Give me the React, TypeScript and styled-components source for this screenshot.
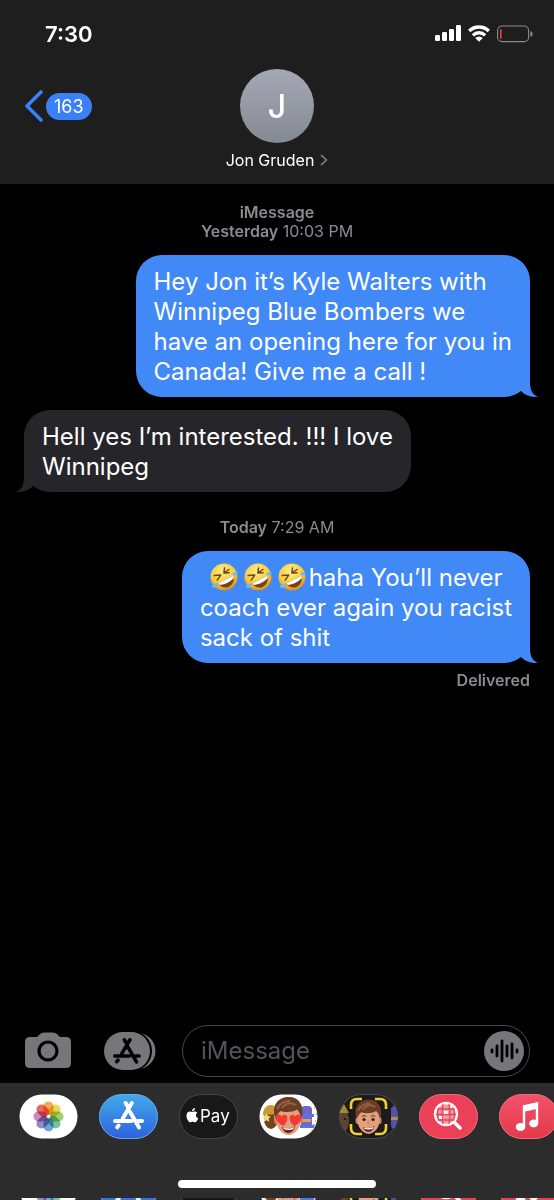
import React from "react";
import styled, { createGlobalStyle, css } from "styled-components";

const Global = createGlobalStyle`
  * { box-sizing: border-box; }
  html, body { margin: 0; background: #000; }
  body { font-family: Inter, "Liberation Sans", sans-serif; color: #fff; }
  button, input { font: inherit; }
`;

const Screen = styled.div`
  display: flex;
  flex-direction: column;
  min-height: 100vh;
`;

const Header = styled.header`
  background: #1e1e1e;
  padding-bottom: 13px;
`;

const StatusBar = styled.div`
  display: flex;
  align-items: center;
  justify-content: space-between;
  height: 69px;
  padding: 0 21px 2px 45px;
`;

const Clock = styled.time`
  font-size: 22px;
  font-weight: 600;
  line-height: 28px;
`;

const StatusIcons = styled.div`
  display: flex;
  align-items: center;
  gap: 7px;
`;

const NavBar = styled.nav`
  display: grid;
  grid-template-columns: 1fr auto 1fr;
  align-items: start;
  padding: 0 24px;
`;

const IconButton = styled.button`
  display: flex;
  align-items: center;
  padding: 0;
  border: 0;
  background: none;
  color: inherit;
  cursor: pointer;
`;

const BackButton = styled(IconButton)`
  gap: 3px;
  height: 74px;
  justify-self: start;
`;

const CountBadge = styled.span`
  padding: 0 8px;
  border-radius: 14px;
  background: #3a80f6;
  font-size: 18px;
  line-height: 27px;
`;

const ContactButton = styled(IconButton)`
  flex-direction: column;
  gap: 6px;
`;

const Avatar = styled.span`
  display: grid;
  place-items: center;
  width: 74px;
  height: 74px;
  border-radius: 50%;
  background: linear-gradient(#a5a9b6, #858992);
  font-size: 32px;
  font-weight: 500;
`;

const ContactName = styled.span`
  display: flex;
  align-items: center;
  gap: 6px;
  font-size: 16px;
  line-height: 22px;
`;

const Thread = styled.main`
  display: flex;
  flex: 1;
  flex-direction: column;
  padding: 19px 24px 24px;
`;

const Stamp = styled.p`
  margin: 0;
  color: #8b8b90;
  font-size: 16px;
  line-height: 19px;
  text-align: center;
  b { font-weight: 600; }
`;

const Bubble = styled.div<{ $sent?: boolean }>`
  position: relative;
  max-width: 80%;
  padding: 12px 18px 10px;
  border-radius: 26px;
  font-size: 24px;
  line-height: 30px;
  ${({ $sent }) =>
    $sent
      ? css`align-self: flex-end; background: #4189f7;`
      : css`align-self: flex-start; background: #26252a;`}
`;

const Tail = styled.svg<{ $sent?: boolean }>`
  position: absolute;
  bottom: 0;
  ${({ $sent }) =>
    $sent
      ? css`right: -8px; fill: #4189f7;`
      : css`left: -8px; fill: #26252a; transform: scaleX(-1);`}
`;

const Messages = styled.div`
  display: flex;
  flex-direction: column;
  gap: 13px;
  margin: 14px -2px 26px 0;
  padding-right: 2px;
`;

const Emoji = styled.svg`
  width: 28px;
  height: 28px;
  margin: 0 3px;
  vertical-align: -5px;
`;

const Receipt = styled.p`
  margin: -18px 0 0;
  color: #8b8b90;
  font-size: 16px;
  font-weight: 600;
  line-height: 19px;
  text-align: right;
`;

const Composer = styled.form`
  display: flex;
  align-items: center;
  padding: 0 24px 6px;
`;

const AppsButton = styled(IconButton)`
  margin: 0 26px 0 31px;
`;

const Field = styled.div`
  display: flex;
  flex: 1;
  align-items: center;
  min-width: 0;
  height: 52px;
  padding: 0 5px 0 18px;
  border: 1px solid #49494d;
  border-radius: 26px;
`;

const MessageInput = styled.input`
  flex: 1;
  min-width: 0;
  padding: 0;
  border: 0;
  outline: 0;
  background: none;
  color: #fff;
  font-size: 24px;
  line-height: 30px;
  &::placeholder { color: #545458; opacity: 1; }
`;

const Drawer = styled.footer`
  padding-top: 11px;
  background: #2c2c2c;
  overflow: hidden;
`;

const AppRow = styled.div`
  display: flex;
  gap: 21px;
  padding-left: 19px;
  overflow: hidden;
`;

const AppButton = styled(IconButton)`
  flex: none;
`;

const HomeBar = styled.div`
  width: 198px;
  height: 8px;
  margin: 41px auto 10px;
  border-radius: 4px;
  background: #fff;
`;

const NextRow = styled.div`
  height: 2px;
  overflow: hidden;
`;

const PeekingApps = styled(AppRow)`
  margin-top: -31px;
`;

function Signal() {
  return (
    <svg width="26" height="17" viewBox="0 0 26 17" fill="#fff" aria-label="Signal">
      <rect x="0" y="10" width="5" height="6" rx="1.3" />
      <rect x="7" y="7" width="5" height="9" rx="1.3" />
      <rect x="14" y="4" width="5" height="12" rx="1.3" />
      <rect x="21" y="0" width="5" height="16" rx="1.3" />
    </svg>
  );
}

function Wifi() {
  return (
    <svg width="22" height="17" viewBox="0 0 22 17" aria-label="Wi-Fi">
      <g fill="none" stroke="#fff" strokeWidth="3.300">
        <path d="M1.200 6a14 14 0 0 1 19.600 0" />
        <path d="M4.900 10.300a8.600 8.600 0 0 1 12.200 0" />
      </g>
      <path fill="#fff" d="M7.200 13a5.400 5.400 0 0 1 7.600 0L11 16.800z" />
    </svg>
  );
}

function Battery() {
  return (
    <svg width="36" height="18" viewBox="0 0 36 18" aria-label="Battery low">
      <rect x=".6" y="1" width="31" height="15.600" rx="4.400" fill="none" stroke="#8b8b8b" strokeWidth="1.100" />
      <rect x="3" y="4" width="1.600" height="10" rx=".8" fill="#e5453a" />
      <path d="M33.400 6v6c3-1.200 3-4.800 0-6z" fill="#8b8b8b" />
    </svg>
  );
}

function Laughing() {
  return (
    <Emoji viewBox="0 0 28 28" role="img" aria-label="rolling on the floor laughing">
      <defs>
        <radialGradient id="face" cx=".45" cy=".3" r=".72">
          <stop offset="0" stopColor="#fff08a" />
          <stop offset=".6" stopColor="#f9cb3f" />
          <stop offset="1" stopColor="#d98a1c" />
        </radialGradient>
      </defs>
      <circle cx="14" cy="14" r="13.500" fill="url(#face)" />
      <path d="M8.500 20.500L23.500 12.600C25 18.500 21.500 23.300 17.300 24.400C13.700 25.200 10.300 23.700 8.500 20.500z" fill="#70431d" />
      <path d="M8.500 20.500L23.500 12.600L23.700 15.200C19.500 19.200 15 21.300 10 22z" fill="#fff" />
      <path d="M4.200 12.600l6.500-.5-3.500 5M14.500 5l-.6 5 5.200-.2M19 6.500l-5 3.400" fill="none" stroke="#70431d" strokeWidth="1.500" strokeLinecap="round" strokeLinejoin="round" />
      <path d="M22.300 10.500c1-.8 3.500-1.800 5.200-1.200.4 1.900-1 3-2.500 3.100-1.400.1-2.500-.8-2.700-1.900zM8.300 20.200c.5 1.600-.6 3.800-2.800 4.400-2.100.5-3.500.1-3.800-1.700 1.300-.7 4.200-2.800 6.600-2.700z" fill="#6bbde8" />
    </Emoji>
  );
}

function BubbleTail({ sent }: { sent?: boolean }) {
  return (
    <Tail $sent={sent} width="34" height="27" viewBox="0 0 34 27" aria-hidden="true">
      <path d="M26 0V12C26 20 28.500 25 34 26.600C28 27.600 22 26 17 21L0 27V10z" />
    </Tail>
  );
}

function StoreMark({ color, x, y }: { color: string; x: number; y: number }) {
  return (
    <g transform={`translate(${x} ${y})`} stroke={color} strokeWidth="4" strokeLinecap="round" fill="none">
      <path d="M12.600 2l3.200 5.300M18.800 2L9.800 17.400M5.600 24.600l-1.400 1.700M2 20h16.500M25 20h4M16.800 10.500l9.300 16" />
    </g>
  );
}

function Capsule({ fill, stroke, children }: { fill: string; stroke?: string; children: React.ReactNode }) {
  return (
    <svg width="59" height="45" viewBox="0 0 59 45" aria-hidden="true">
      <defs>
        <linearGradient id="blue" x2="0" y2="1"><stop stopColor="#43a9eb" /><stop offset="1" stopColor="#2d61df" /></linearGradient>
        <linearGradient id="red" x2="0" y2="1"><stop stopColor="#f4516c" /><stop offset="1" stopColor="#e33a48" /></linearGradient>
        <clipPath id="capsule"><rect width="59" height="45" rx="22.500" /></clipPath>
      </defs>
      <rect x=".5" y=".5" width="58" height="44" rx="22" fill={fill} stroke={stroke} />
      <g clipPath="url(#capsule)">{children}</g>
    </svg>
  );
}

function Photos() {
  const petals = ["#f5a03b", "#e6d53c", "#97c858", "#62b89c", "#5c98d2", "#8a77bd", "#c07cb5", "#e9534a"];
  return (
    <Capsule fill="#fff">
      {petals.map((color, i) => (
        <rect key={color} x="24.500" y="7.500" width="10" height="13.500" rx="5" fill={color} opacity=".88" style={{ mixBlendMode: "multiply" }} transform={`rotate(${i * 45} 29.500 22.500)`} />
      ))}
    </Capsule>
  );
}

function Face({ hearts }: { hearts?: boolean }) {
  return (
    <g>
      <ellipse cx="17.500" cy="26" rx="2.500" ry="4" fill="#cf8462" />
      <ellipse cx="41.500" cy="26" rx="2.500" ry="4" fill="#cf8462" />
      <path d="M17.500 15h24v12c0 7-6 14-12 14s-12-7-12-14z" fill="#e3a07c" />
      <path d="M16 24C12.500 11 19 3 30 3c10 0 15.500 8 13 21-1.500-3-2.500-6-5-8.500-5 3-12 3-16.500 1.500-2 2-3.500 4-5.500 7z" fill="#6b3c26" />
      <path d="M18 15c3-6 8-8 13-8M23 14c4-5 9-6 14-3" stroke="#98603f" strokeWidth="2" fill="none" />
      <path d="M23 33c4 2 9 2 13-1-1 5-4 7-6.500 7s-5.500-2-6.500-6z" fill="#7a2524" />
      <path d="M24 33.600c4 1.500 7 1.300 11-.6l-.8 2.300c-3 1-6.400 1-9.200 0z" fill="#fff" />
      {hearts ? (
        <g fill="#f23a32">
          <path d="M24.500 32c-4-2-8-5-8-8.500 0-3.500 4.500-4 6-1 2-3 6-2 6 1.500 0 3-2 6-4 8z" />
          <path d="M35.500 32c-3-2-5-5-5-8 0-3.500 4-4.500 6-1.500 1.500-3 6-2.500 6 1 0 3.500-3 6.500-7 8.500z" />
        </g>
      ) : (
        <g>
          <circle cx="24.500" cy="25" r="1.800" fill="#302019" />
          <circle cx="34.500" cy="25" r="1.800" fill="#302019" />
          <path d="M22 21.500q2.500-1.500 5 0M32 21.500q2.500-1.500 5 0" stroke="#68361f" strokeWidth="1.200" fill="none" />
          <path d="M29.500 26l-1 3.500h2.200" stroke="#c77958" fill="none" />
        </g>
      )}
    </g>
  );
}

function Stickers() {
  return (
    <Capsule fill="#fff">
      <ellipse cx="12" cy="25" rx="7" ry="10" fill="#70441f" />
      <path d="M4 21c0-13 15-13 16-1z" fill="#c99a35" />
      <path d="M7.500 19l1.400 3 3.100.4-2.300 2.100.6 3.300-2.800-1.600-2.800 1.600.6-3.300L3 22.400l3.100-.4zM15 19l1.400 3 3 .4-2.300 2.100.6 3.300-2.700-1.600z" fill="#f5dc6b" />
      <rect x="42" y="12" width="11" height="22" rx="4" fill="#6f66c8" />
      <path d="M40 20h15v3H40zM41 31h14v3H41z" fill="#5077e8" />
      <path d="M44 25h8v3h-8z" fill="#d5a657" />
      <path d="M55 14h1M56 27h1M52 37h1" stroke="#e6aa37" strokeWidth="1.500" />
      <path d="M57 20h1M54 31h2" stroke="#8d72e8" strokeWidth="1.500" />
      <Face hearts />
    </Capsule>
  );
}

function Memoji() {
  return (
    <Capsule fill="#1b1b1b" stroke="#4c4c4c">
      <ellipse cx="4" cy="27" rx="6" ry="11" fill="#5d4334" />
      <path d="M0 19l5-9 5 9z" fill="#a08a35" />
      <circle cx="6" cy="25" r="1" fill="#111" />
      <rect x="52" y="12" width="9" height="23" rx="4" fill="#5650a7" />
      <path d="M52 23h8v3h-8z" fill="#ae8c55" />
      <path d="M12 15v-4q0-6 6-6h5M36 5h5q6 0 6 6v4M12 30v4q0 6 6 6h5M36 40h5q6 0 6-6v-4" fill="none" stroke="#f0cf32" strokeWidth="2.600" />
      <g transform="translate(3 3) scale(.9)"><Face /></g>
    </Capsule>
  );
}

function ApplePay({ labelled = true }: { labelled?: boolean }) {
  return (
    <Capsule fill="#191818" stroke="#474747">
      <g transform="translate(7 13) scale(.55)" fill="#fff">
        <path d="M18 15.200c0-3.100 2.600-4.600 2.700-4.700-1.500-2.200-3.800-2.500-4.600-2.500-1.900-.2-3.800 1.200-4.800 1.200S8.800 8 7.200 8C5 8 3 9.300 1.900 11.200c-2.300 4-.6 10 1.700 13.200 1.100 1.600 2.400 3.400 4.100 3.300 1.700-.1 2.300-1.100 4.300-1.100s2.600 1.100 4.300 1c1.800 0 2.900-1.600 4-3.200 1.300-1.800 1.800-3.600 1.800-3.700-.1 0-4.100-1.500-4.100-5.500zM15 5.800c.9-1.100 1.500-2.600 1.300-4.100-1.300.1-2.900.9-3.800 1.900-.8 1-1.600 2.500-1.400 4 1.500.1 3-.7 3.900-1.800z" />
      </g>
      {labelled && <text x="21" y="28" fill="#fff" fontFamily="Inter, sans-serif" fontSize="17">Pay</text>}
    </Capsule>
  );
}

function ImageSearch() {
  return (
    <Capsule fill="#ec4058" stroke="#f36d80">
      <path d="M35 28l6 6" stroke="#fff" strokeWidth="3.600" strokeLinecap="round" />
      <circle cx="27" cy="20" r="11" fill="#f49aa7" stroke="#fff" strokeWidth="2.400" />
      <path d="M18.500 15h17M17 20.500h20M18.500 26h17M24 10q-2 10 0 20M30 10q2 10 0 20M19.500 14q-2 6 0 12M34.500 14q2 6 0 12" stroke="#ec4058" strokeWidth="1.300" fill="none" />
      <path d="M25 17h4v3h-4zM31 12h2v2h-2zM20 22h3v3h-3z" fill="#fff" />
    </Capsule>
  );
}

function Music() {
  return (
    <Capsule fill="url(#red)" stroke="#f36d80">
      <path d="M25 32V12.500l13-3V29M25 16.500l13-3" stroke="#fff" strokeWidth="2.400" fill="none" />
      <path d="M24 11.500l15-3.300v5.300l-15 3.300z" fill="#fff" />
      <ellipse cx="21.500" cy="33" rx="4.800" ry="4" fill="#fff" />
      <ellipse cx="34.700" cy="29.500" rx="4.500" ry="3.900" fill="#fff" />
    </Capsule>
  );
}

const apps = [
  { name: "Photos", icon: <Photos /> },
  { name: "App Store", icon: <Capsule fill="url(#blue)" stroke="#65aeea"><StoreMark color="#fff" x={14} y={7} /></Capsule> },
  { name: "Apple Pay", icon: <ApplePay />, peek: <ApplePay labelled={false} /> },
  { name: "Stickers", icon: <Stickers /> },
  { name: "Memoji", icon: <Memoji /> },
  { name: "Images", icon: <ImageSearch /> },
  { name: "Music", icon: <Music /> },
];

export default function App() {
  return (
    <Screen>
      <Global />
      <Header>
        <StatusBar>
          <Clock>7:30</Clock>
          <StatusIcons><Signal /><Wifi /><Battery /></StatusIcons>
        </StatusBar>
        <NavBar>
          <BackButton aria-label="Back, 163 unread">
            <svg width="19" height="32" viewBox="0 0 19 32" aria-hidden="true">
              <path d="M17 2L3 16l14 14" fill="none" stroke="#3a80f6" strokeWidth="3.600" strokeLinecap="round" strokeLinejoin="round" />
            </svg>
            <CountBadge>163</CountBadge>
          </BackButton>
          <ContactButton>
            <Avatar>J</Avatar>
            <ContactName>
              Jon Gruden
              <svg width="8" height="12" viewBox="0 0 8 12" aria-hidden="true"><path d="M1 1l5.500 5L1 11" fill="none" stroke="#8b8b90" strokeWidth="1.400" /></svg>
            </ContactName>
          </ContactButton>
        </NavBar>
      </Header>

      <Thread>
        <Stamp><b>iMessage</b></Stamp>
        <Stamp><b>Yesterday</b> 10:03 PM</Stamp>
        <Messages>
          <Bubble $sent>
            <BubbleTail sent />
            Hey Jon it’s Kyle Walters with<br />Winnipeg Blue Bombers we<br />have an opening here for you in<br />Canada! Give me a call !
          </Bubble>
          <Bubble>
            <BubbleTail />
            Hell yes I’m interested. !!! I love<br />Winnipeg
          </Bubble>
        </Messages>
        <Stamp><b>Today</b> 7:29 AM</Stamp>
        <Messages>
          <Bubble $sent>
            <BubbleTail sent />
            &nbsp;<Laughing /><Laughing /><Laughing />haha You’ll never<br />coach ever again you racist<br />sack of shit
          </Bubble>
        </Messages>
        <Receipt>Delivered</Receipt>
      </Thread>

      <Composer onSubmit={(e) => e.preventDefault()}>
        <IconButton type="button" aria-label="Camera">
          <svg width="49" height="38" viewBox="0 0 49 38" aria-hidden="true">
            <path d="M6 5h7l3-3q1.500-1.500 4-1.500h9q2.500 0 4 1.500l3 3h6q5 0 5 5v21q0 5-5 5H6q-5 0-5-5V10q0-5 5-5z" fill="#77777a" />
            <circle cx="24" cy="19" r="9" fill="none" stroke="#000" strokeWidth="3.200" />
          </svg>
        </IconButton>
        <AppsButton type="button" aria-label="Apps">
          <svg width="52" height="38" viewBox="0 0 52 38" aria-hidden="true">
            <rect x="6" y="1" width="45.500" height="36" rx="18" fill="#77777a" />
            <rect x="-1" y="-1" width="49" height="40" rx="20" fill="#000" />
            <rect x="0" y="0" width="46" height="38" rx="19" fill="#77777a" />
            <g transform="translate(9 6) scale(.9)"><StoreMark color="#000" x={0} y={0} /></g>
          </svg>
        </AppsButton>
        <Field>
          <MessageInput aria-label="Message" placeholder="iMessage" />
          <IconButton type="button" aria-label="Record audio">
            <svg width="40" height="40" viewBox="0 0 40 40" aria-hidden="true">
              <circle cx="20" cy="20" r="20" fill="#77777a" />
              <path d="M8 19v2M13 15v10M18 10v20M23 15v10M28 13v14M33 19v2" stroke="#000" strokeWidth="2.800" strokeLinecap="round" />
            </svg>
          </IconButton>
        </Field>
      </Composer>

      <Drawer>
        <AppRow>
          {apps.map((app) => <AppButton key={app.name} aria-label={app.name}>{app.icon}</AppButton>)}
        </AppRow>
        <HomeBar />
        <NextRow aria-hidden="true">
          <PeekingApps>
            {apps.map((app) => <AppButton as="span" key={app.name}>{app.peek ?? app.icon}</AppButton>)}
          </PeekingApps>
        </NextRow>
      </Drawer>
    </Screen>
  );
}
